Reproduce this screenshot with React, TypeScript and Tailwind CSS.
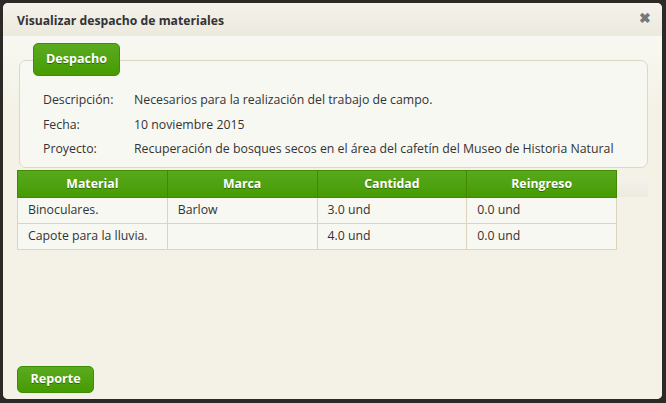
const rows = [
  { label: "Descripción:", value: "Necesarios para la realización del trabajo de campo." },
  { label: "Fecha:", value: "10 noviembre 2015" },
  { label: "Proyecto:", value: "Recuperación de bosques secos en el área del cafetín del Museo de Historia Natural" },
];

const items = [
  { material: "Binoculares.", marca: "Barlow", cantidad: "3.0 und", reingreso: "0.0 und" },
  { material: "Capote para la lluvia.", marca: "", cantidad: "4.0 und", reingreso: "0.0 und" },
];

const greenBtn =
  "rounded-[5px] border border-[#3f8d05] bg-gradient-to-b from-[#5aab1e] to-[#469b00] text-white font-bold text-[12.6px] [text-shadow:0_1px_0_#2f6b00]";

const App = () => {
  return (
    <div
      className="w-[666px] h-[403px] bg-[#2b2a26] p-[3px] pr-[4px] pb-[4px] overflow-hidden"
      style={{ fontFamily: '"Open Sans", "Noto Sans", sans-serif' }}
    >
      <div className="h-full flex flex-col rounded-[5px] bg-[#f4f2e6] overflow-hidden">
        {/* Title bar */}
        <div className="h-[33px] shrink-0 flex items-center justify-between pl-[14px] pr-[11px] pt-[3px] bg-gradient-to-b from-[#f4f2eb] to-[#ece9de]">
          <span className="text-[12.2px] font-bold text-[#333]">Visualizar despacho de materiales</span>
          <span className="text-[14px] leading-none font-bold text-[#777] -mt-[6px]">✖</span>
        </div>

        {/* Body */}
        <div className="flex-1 flex flex-col pl-[14px] pr-[14px] pt-[7px] pb-[6px] bg-gradient-to-b from-[#f8f8f2] to-[#f4f2e6] to-[20%]">
          <div className="relative pt-[17px] pl-[2px]">
            <div className={`absolute left-[16px] top-0 h-[33px] w-[87px] flex items-center justify-center ${greenBtn}`}>
              Despacho
            </div>
            <div className="h-[108px] rounded-[7px] border border-[#ddd8c6] bg-[#f8f8f2] pt-[30px] pl-[23px]">
              {rows.map((r) => (
                <div key={r.label} className="flex h-[24.5px] items-start text-[12.3px] text-[#333]">
                  <span className="w-[91px] shrink-0">{r.label}</span>
                  <span className="whitespace-nowrap">{r.value}</span>
                </div>
              ))}
            </div>
          </div>

          <div className="mt-[2px] flex">
            <table className="w-[600px] shrink-0 border-collapse text-[12.3px] text-[#333] table-fixed">
              <thead>
                <tr className="h-[27px] bg-gradient-to-b from-[#58a91c] to-[#459a00] text-white">
                  {["Material", "Marca", "Cantidad", "Reingreso"].map((h) => (
                    <th key={h} className="border border-[#3f8a00] font-bold text-[12.3px] [text-shadow:0_1px_0_#2f6b00]">
                      {h}
                    </th>
                  ))}
                </tr>
              </thead>
              <tbody>
                {items.map((it) => (
                  <tr key={it.material} className="h-[26px] bg-[#f8f8f2]">
                    <td className="border border-[#ddd4bd] px-[10px]">{it.material}</td>
                    <td className="border border-[#ddd4bd] px-[10px]">{it.marca}</td>
                    <td className="border border-[#ddd4bd] px-[10px]">{it.cantidad}</td>
                    <td className="border border-[#ddd4bd] px-[10px]">{it.reingreso}</td>
                  </tr>
                ))}
              </tbody>
            </table>
            <div className="mt-[7px] h-[20px] w-[33px] shrink bg-gradient-to-b from-[#f4f2ec] to-[#edeade]" />
          </div>

          <div className="mt-auto">
            <div className={`h-[27px] w-[77px] flex items-center justify-center ${greenBtn}`}>Reporte</div>
          </div>
        </div>
      </div>
    </div>
  );
};

export default App;
